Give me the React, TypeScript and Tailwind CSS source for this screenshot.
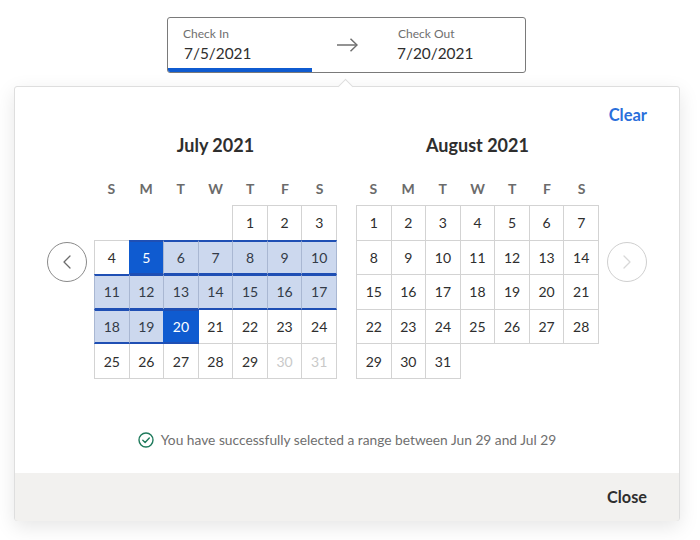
import React from 'react';
import { ChevronLeft, ChevronRight } from 'lucide-react';

const weekdays = ['S', 'M', 'T', 'W', 'T', 'F', 'S'];

function dayClass(month: number, day: number) {
  if (month === 0 && (day === 5 || day === 20)) {
    return 'bg-[#0f5bd0] text-white border-[#0f5bd0] border-t-[#1f4fb4] border-b-[#1f4fb4] border-t-2 border-b-2 z-10';
  }
  if (month === 0 && day > 5 && day < 20) {
    return 'bg-[#ccd8ee] text-[#333b47] border-[#a9b7d2] border-t-[#1f4fb4] border-b-[#1f4fb4] border-t-2 border-b-2 z-10';
  }
  if (month === 0 && day > 29) {
    return 'bg-white text-[#c9c9c9] border-[#d3d3d3]';
  }
  return 'bg-white text-[#2e2e2e] border-[#d3d3d3]';
}

function MonthGrid({ title, month, offset, total }: { title: string; month: number; offset: number; total: number }) {
  return (
    <div className="w-[243px]">
      <h2 className="text-center text-[18px] leading-[22px] font-bold text-[#2e2e2e]">{title}</h2>
      <div className="mt-[24px] grid grid-cols-7">
        {weekdays.map((d, i) => (
          <div key={i} className="text-center text-[14px] leading-[18px] font-bold text-[#6b6b6b]">
            {d}
          </div>
        ))}
      </div>
      <div className="mt-[7px] grid w-[242px] grid-cols-7 auto-rows-[34.6px]">
        {Array.from({ length: offset }).map((_, i) => (
          <div key={`blank-${i}`} />
        ))}
        {Array.from({ length: total }).map((_, i) => (
          <div
            key={i}
            className={`relative -mr-px -mb-px flex items-center justify-center border text-[14px] ${dayClass(month, i + 1)}`}
          >
            {i + 1}
          </div>
        ))}
      </div>
    </div>
  );
}

export default function App() {
  return (
    <div className="h-[540px] w-[700px] overflow-hidden bg-white pt-[17px] font-['Lato','Liberation_Sans',sans-serif]">
      <div className="relative ml-[167px] flex h-[56px] w-[359px] overflow-hidden rounded-[3px] border border-[#7a7a7a] bg-white">
        <div className="w-[146px] pl-[15px] pt-[8px]">
          <div className="text-[12px] leading-[16px] text-[#6f6f6f]">Check In</div>
          <div className="mt-[1px] pl-[1px] text-[15.4px] leading-[20px] text-[#2e2e2e]">7/5/2021</div>
        </div>
        <div className="w-[84px] pl-[23px] pt-[20px] text-[#6f6f6f]">
          <svg width="21" height="14" viewBox="0 0 21 14" fill="none" stroke="currentColor" strokeWidth="1.5">
            <path d="M0 7H20" />
            <path d="M13.5 0.8 20 7 13.5 13.2" />
          </svg>
        </div>
        <div className="pt-[8px]">
          <div className="text-[12px] leading-[16px] text-[#6f6f6f]">Check Out</div>
          <div className="-ml-[1px] mt-[1px] text-[15.4px] leading-[20px] text-[#2e2e2e]">7/20/2021</div>
        </div>
        <div className="absolute bottom-0 left-0 h-[4px] w-[144px] bg-[#0f5bd0]" />
      </div>

      <div className="relative ml-[14px] mt-[13px] h-[435px] w-[666px] rounded-[3px] border border-[#dedede] bg-white shadow-[0_6px_20px_rgba(0,0,0,0.1)]">
        <div className="absolute -top-[6px] left-[325px] h-[11px] w-[11px] rotate-45 border-l border-t border-[#dedede] bg-white" />
        <div className="relative flex h-[386px] flex-col">
          <div className="flex justify-end pr-[32px] pt-[18px]">
            <button className="text-[16.5px] leading-[20px] font-bold text-[#2a6fdb]">Clear</button>
          </div>
          <div className="mt-[9px] flex pl-[32px]">
            <button className="mt-[108px] flex h-[40px] w-[40px] items-center justify-center rounded-full border border-[#8a8a8a] bg-white text-[#6b6b6b]">
              <ChevronLeft size={24} strokeWidth={1.3} />
            </button>
            <div className="ml-[7px]">
              <MonthGrid title="July 2021" month={0} offset={4} total={31} />
            </div>
            <div className="ml-[19px]">
              <MonthGrid title="August 2021" month={1} offset={0} total={31} />
            </div>
            <button className="ml-[8px] mt-[108px] flex h-[40px] w-[40px] items-center justify-center rounded-full border border-[#cfcfcf] bg-white text-[#d8d8d8]">
              <ChevronRight size={24} strokeWidth={1.3} />
            </button>
          </div>
          <div className="mt-[53px] flex items-center justify-center gap-[7px] text-[13.75px] leading-[18px] text-[#6f6f6f]">
            <svg width="16" height="16" viewBox="0 0 16 16" fill="none" stroke="#1f7a5c" strokeWidth="1.4">
              <circle cx="8" cy="8" r="7" />
              <path d="M4.8 8.2 7.1 10.4 11.3 5.9" strokeLinecap="round" strokeLinejoin="round" />
            </svg>
            <span>You have successfully selected a range between Jun 29 and Jul 29</span>
          </div>
        </div>
        <div className="flex h-[48px] items-center justify-end rounded-b-[3px] bg-[#f2f1ef] pr-[32px]">
          <button className="text-[16.25px] font-bold text-[#2e2e2e]">Close</button>
        </div>
      </div>
    </div>
  );
}
